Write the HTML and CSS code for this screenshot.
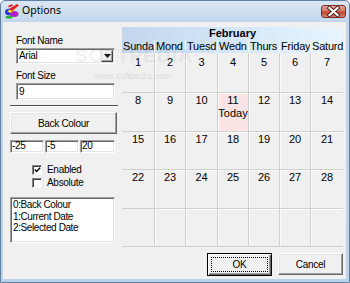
FILE: index.html
```html
<!DOCTYPE html>
<html>
<head>
<meta charset="utf-8">
<link rel="stylesheet" href="styles.css">
</head>
<body>
<div class="window">
  <div class="titlebar">
    <svg class="app-icon" width="16" height="16" viewBox="0 0 16 16">
      <ellipse cx="5" cy="9" rx="4" ry="3.2" fill="#2233d6"/>
      <ellipse cx="10" cy="11" rx="4.5" ry="3" fill="#b022c8"/>
      <path d="M3 8 L9 5 L11 7 L6 10 Z" fill="#f4e020"/>
      <path d="M5 6 L13 1 L15 2.5 L8 8 Z" fill="#e22020"/>
      <path d="M4 3 L8 1 L9 2.5 L5 4.5 Z" fill="#e22020"/>
      <ellipse cx="5" cy="14" rx="3.5" ry="1.6" fill="#22b030"/>
    </svg>
    <span class="title">Options</span>
    <div class="close">
      <svg width="25" height="13" viewBox="0 0 25 13">
        <path d="M8.5 3 L16.5 10 M16.5 3 L8.5 10" stroke="#4a1c14" stroke-width="4" stroke-linecap="square"/>
        <path d="M8.5 3 L16.5 10 M16.5 3 L8.5 10" stroke="#ffffff" stroke-width="2.2" stroke-linecap="square"/>
      </svg>
    </div>
  </div>
  <div class="client">
    <div class="main">
      <div class="left">
        <div class="lbl lbl-name">Font Name</div>
        <div class="combo">
          <span class="combo-text">Arial</span>
          <span class="drop"><svg width="7" height="4" viewBox="0 0 7 4"><path d="M0 0 H7 L3.5 4 Z" fill="#000"/></svg></span>
        </div>
        <div class="lbl lbl-size">Font Size</div>
        <div class="field field-size">9</div>
        <div class="sep"></div>
        <div class="btn btn-back">Back Colour</div>
        <div class="triple">
          <div class="field small w34">-25</div>
          <div class="field small w34">-5</div>
          <div class="field small w35">20</div>
        </div>
        <div class="check check-first">
          <span class="box"><svg width="8" height="8" viewBox="0 0 8 8"><path d="M1 3.5 L3 5.8 L7 1.5" stroke="#000" stroke-width="1.6" fill="none"/></svg></span>
          <span>Enabled</span>
        </div>
        <div class="check">
          <span class="box"></span>
          <span>Absolute</span>
        </div>
        <div class="listbox">
          <div>0:Back Colour</div>
          <div>1:Current Date</div>
          <div>2:Selected Date</div>
        </div>
      </div>
      <div class="calendar">
        <div class="cal-head">
          <div class="month">February</div>
          <div class="days">
            <span>Sunda</span><span>Mond</span><span>Tuesd</span><span>Wedn</span><span>Thurs</span><span>Friday</span><span>Saturd</span>
          </div>
        </div>
        <div class="grid">
          <div class="cell">1</div><div class="cell">2</div><div class="cell">3</div><div class="cell">4</div><div class="cell">5</div><div class="cell">6</div><div class="cell">7</div>
          <div class="cell">8</div><div class="cell">9</div><div class="cell">10</div><div class="cell today">11<br>Today</div><div class="cell">12</div><div class="cell">13</div><div class="cell">14</div>
          <div class="cell">15</div><div class="cell">16</div><div class="cell">17</div><div class="cell">18</div><div class="cell">19</div><div class="cell">20</div><div class="cell">21</div>
          <div class="cell">22</div><div class="cell">23</div><div class="cell">24</div><div class="cell">25</div><div class="cell">26</div><div class="cell">27</div><div class="cell">28</div>
          <div class="cell"></div><div class="cell"></div><div class="cell"></div><div class="cell"></div><div class="cell"></div><div class="cell"></div><div class="cell"></div>
        </div>
      </div>
    </div>
    <div class="buttons">
      <div class="btn btn-ok"><span class="focus">OK</span></div>
      <div class="btn btn-cancel">Cancel</div>
    </div>
  </div>
  <div class="watermark">SOFTPEDIA</div>
  <div class="watermark-url">www.softpedia.com</div>
</div>
</body>
</html>
```

FILE: styles.css
```css
* { box-sizing: border-box; }
html, body { margin: 0; padding: 0; }
body {
  width: 350px;
  height: 283px;
  overflow: hidden;
  background: #ffffff;
  font-family: "Liberation Sans", Arial, sans-serif;
  color: #000;
}

.window {
  position: relative;
  width: 350px;
  height: 283px;
  border: 1px solid #5f7fa3;
  border-radius: 5px 5px 0 0;
  background: linear-gradient(#dbe6f3, #c2d6ec 21px, #bcd2ea);
  display: flex;
  flex-direction: column;
}

/* Title bar */
.titlebar {
  height: 21px;
  display: flex;
  align-items: flex-start;
  padding-left: 3px;
}
.app-icon { margin-top: 2px; flex: none; }
.title {
  margin-left: 2px;
  margin-top: 2px;
  font-family: "Noto Sans", "Liberation Sans", sans-serif;
  font-size: 10.5px;
  line-height: 15px;
  color: #000;
}
.close {
  margin-left: auto;
  margin-right: 3px;
  margin-top: 4px;
  width: 25px;
  height: 13px;
  border: 1px solid #7a2f26;
  border-radius: 3px;
  background: linear-gradient(#e6a496, #d27a68 45%, #c2442f 55%, #d8826c);
  display: flex;
  align-items: center;
  justify-content: center;
  overflow: hidden;
}
.close svg { display: block; margin: -1px; }

/* Client area */
.client {
  flex: 1;
  margin: 0 3px 3px 2px;
  background: #f0f0f0;
  padding: 5px 3px 0 7px;
  display: flex;
  flex-direction: column;
}
.main {
  display: flex;
  gap: 4px;
  height: 220px;
}

/* Left panel */
.left {
  width: 108px;
  display: flex;
  flex-direction: column;
  font-size: 10px;
  letter-spacing: -0.3px;
}
.lbl {
  font-size: 10px;
  line-height: 12px;
  height: 12px;
  margin-left: 6px;
}
.lbl-name { margin-top: 8px; }
.lbl-size { margin-top: 6px; }

.combo {
  margin: 1px 0 0 6px;
  width: 99px;
  height: 16px;
  background: #fff;
  border: 1px solid;
  border-color: #a0a0a0 #ffffff #ffffff #a0a0a0;
  box-shadow: inset 1px 1px 0 #696969, inset -1px -1px 0 #e3e3e3;
  display: flex;
  padding: 1px;
}
.combo-text {
  flex: 1;
  line-height: 12px;
  padding-left: 1px;
}
.drop {
  width: 12px;
  height: 12px;
  background: #f0f0f0;
  border: 1px solid;
  border-color: #e3e3e3 #404040 #404040 #e3e3e3;
  box-shadow: inset -1px -1px 0 #a0a0a0, inset 1px 1px 0 #ffffff;
  display: flex;
  align-items: center;
  justify-content: center;
}
.drop svg { display: block; }

.field {
  background: #fff;
  border: 1px solid;
  border-color: #a0a0a0 #ffffff #ffffff #a0a0a0;
  box-shadow: inset 1px 1px 0 #696969, inset -1px -1px 0 #e3e3e3;
  padding-left: 2px;
}
.field-size {
  margin: 1px 0 0 6px;
  width: 99px;
  height: 17px;
  line-height: 15px;
}
.sep {
  margin-top: 5px;
  height: 2px;
  border-top: 1px solid #4a4a4a;
  border-bottom: 1px solid #ffffff;
}

.btn {
  background: #f0f0f0;
  border: 1px solid;
  border-color: #ffffff #696969 #696969 #ffffff;
  box-shadow: inset -1px -1px 0 #a0a0a0, inset 1px 1px 0 #e3e3e3;
  display: flex;
  align-items: center;
  justify-content: center;
  font-size: 10px;
  letter-spacing: -0.3px;
}
.btn-back {
  margin-top: 5px;
  width: 107px;
  height: 22px;
}

.triple {
  margin-top: 6px;
  display: flex;
  gap: 1px;
  height: 13px;
}
.field.small {
  height: 13px;
  line-height: 9px;
  padding-left: 1px;
}
.w34 { width: 34px; }
.w35 { width: 35px; }

.check {
  height: 13px;
  display: flex;
  align-items: center;
  gap: 5px;
  padding-left: 22px;
  line-height: 12px;
}
.check-first { margin-top: 10px; }
.box {
  width: 10px;
  height: 10px;
  background: #fff;
  border: 1px solid;
  border-color: #808080 #ffffff #ffffff #808080;
  box-shadow: inset 1px 1px 0 #404040;
  display: flex;
  align-items: center;
  justify-content: center;
}
.box svg { display: block; margin: 1px 0 0 1px; }

.listbox {
  margin-top: 8px;
  width: 105px;
  height: 46px;
  background: #fff;
  border: 1px solid;
  border-color: #a0a0a0 #ffffff #ffffff #a0a0a0;
  box-shadow: inset 1px 1px 0 #696969, inset -1px -1px 0 #e3e3e3;
  padding: 1px 0 0 2px;
  line-height: 11.5px;
  letter-spacing: -0.4px;
}

/* Calendar */
.calendar {
  width: 221px;
  font-size: 11px;
}
.cal-head {
  height: 26px;
  background: linear-gradient(to right, #c2d7ee, #d6e8f8 55%, #e8f5fe);
}
.month {
  height: 13px;
  line-height: 13px;
  text-align: center;
  font-weight: bold;
}
.days,
.grid {
  display: grid;
  grid-template-columns: 33px 31px 32px 31px 31px 31px 32px;
}
.days span {
  height: 13px;
  line-height: 13px;
  padding-left: 1px;
  white-space: nowrap;
  overflow: hidden;
  letter-spacing: -0.2px;
  border-right: 1px solid rgba(255, 255, 255, 0.7);
}
.days span:last-child { border-right: none; }
.grid {
  grid-template-rows: 40px 39px 38px 39px 38px;
}
.cell {
  text-align: center;
  line-height: 13px;
  padding-top: 1px;
  border-right: 1px solid #cfcfcf;
  border-bottom: 1px solid #cfcfcf;
  box-shadow: inset 1px 1px 0 #fbfbfb;
}
.cell:nth-child(-n+7) { padding-top: 3px; box-shadow: inset 1px 0 0 #fbfbfb; }
.cell:nth-child(7n) { border-right: none; }
.cell:nth-child(7n+1) { box-shadow: none; }
.cell.today { background: #fce4e4; }

/* Dialog buttons */
.buttons {
  margin-top: 6px;
  display: flex;
  justify-content: flex-end;
  gap: 6px;
}
.btn-ok,
.btn-cancel {
  width: 65px;
  height: 23px;
}
.btn-ok {
  border: 1px solid #000;
  box-shadow: inset 1px 1px 0 #ffffff, inset -1px -1px 0 #696969, inset -2px -2px 0 #a0a0a0;
  padding: 3px;
}
.focus {
  flex: 1;
  align-self: stretch;
  display: flex;
  align-items: center;
  justify-content: center;
  border: 1px dotted #000;
}
.btn-cancel { height: 22px; }

/* Watermark overlay */
.watermark {
  position: absolute;
  left: 74px;
  top: 44px;
  font-size: 19px;
  font-weight: bold;
  letter-spacing: 1px;
  color: rgba(170, 170, 170, 0.16);
  pointer-events: none;
}
.watermark-url {
  position: absolute;
  left: 93px;
  top: 70px;
  font-size: 9px;
  color: rgba(130, 130, 130, 0.22);
  pointer-events: none;
}
```
